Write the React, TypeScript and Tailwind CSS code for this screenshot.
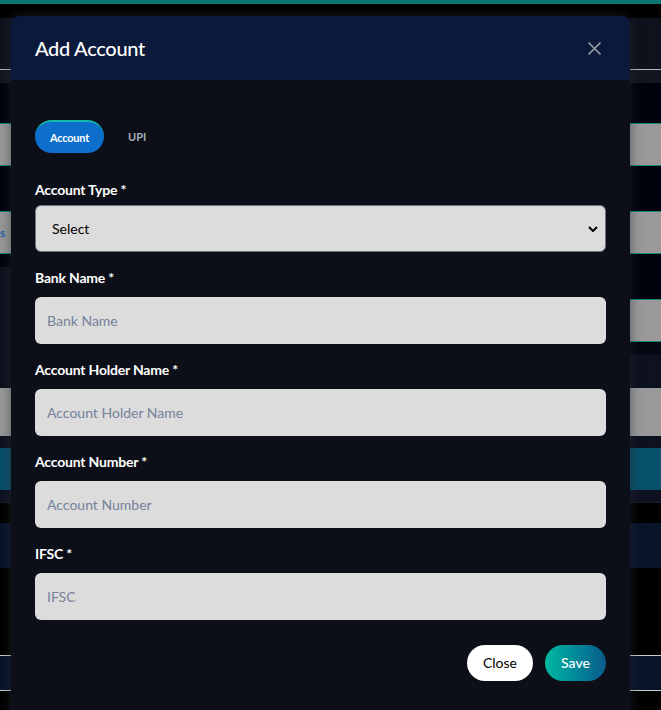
import React from "react";

function Field({ label, placeholder }: { label: string; placeholder: string }) {
  return (
    <div className="flex flex-col">
      <label className="text-[14px] leading-[20px] font-bold text-white mb-[9px] tracking-[-0.2px]">{label}</label>
      <input
        placeholder={placeholder}
        className="h-[47px] w-full rounded-[6px] bg-[#dcdcdc] px-[12px] text-[14px] text-black placeholder:text-[#74839a] outline-none"
      />
    </div>
  );
}

export default function App() {
  return (
    <div className="relative h-[710px] w-[661px] overflow-hidden bg-black" style={{ fontFamily: "Lato, 'Noto Sans', sans-serif" }}>
      {/* page behind the modal (dimmed) */}
      <div className="flex flex-col">
        <div className="h-[4px] bg-[#0a7472]" />
        <div className="h-[14px] bg-black" />
        <div className="h-[52px] bg-[#0e121c] border-b border-[#b8bcc2]" />
        <div className="h-[13px] bg-[#12161f]" />
        <div className="h-[40px] bg-[#00030e]" />
        <div className="h-[43px] bg-[#999999] border-y border-[#0b8a7c]" />
        <div className="h-[45px] bg-[#00030e]" />
        <div className="h-[43px] bg-[#999999] border-y border-[#0b8a7c] flex items-center">
          <span className="text-[#1d5fb0] text-[12px] font-bold leading-none">s</span>
        </div>
        <div className="flex h-[134px]">
          <div className="w-[40px] flex flex-col">
            <div className="h-[13px] bg-[#00030e]" />
            <div className="flex-1 bg-[#0d111c]" />
          </div>
          <div className="flex-1 flex flex-col bg-[#00030e]">
            <div className="h-[45px]" />
            <div className="h-[43px] bg-[#999999] border-y border-[#0b8a7c]" />
            <div className="h-[13px] bg-[#050810]" />
            <div className="flex-1 bg-[#0e1220]" />
          </div>
        </div>
        <div className="h-[48px] bg-[#999999]" />
        <div className="h-[12px] bg-[#0e1220]" />
        <div className="h-[42px] bg-[#07506a]" />
        <div className="h-[13px] bg-[#0e1220] border-b border-[#1a1f2a]" />
        <div className="h-[20px] bg-black" />
        <div className="h-[45px] bg-[#081428]" />
        <div className="h-[87px] bg-black" />
        <div className="h-[36px] bg-[#081428] border-y border-[#c8ccd0]" />
        <div className="h-[20px] bg-black" />
      </div>

      {/* modal */}
      <div className="absolute left-[11px] top-[16px] w-[619px] h-[720px] rounded-t-[8px] overflow-hidden bg-[#0c0f18] shadow-[0_0_12px_rgba(40,44,54,0.6)]">
        <div className="h-[64px] bg-[#0b1a3b] flex items-center justify-between pl-[24px] pr-[28px]">
          <h2 className="text-[20px] font-medium text-white tracking-[-0.3px]">Add Account</h2>
          <button className="text-[#9aa0a8]">
            <svg width="15" height="15" viewBox="0 0 15 15" fill="none" stroke="currentColor" strokeWidth="1.6">
              <path d="M1.5 1.5 L13.5 13.5 M13.5 1.5 L1.5 13.5" />
            </svg>
          </button>
        </div>
        <div className="px-[24px] pt-[40px]">
          <div className="flex items-center gap-[24px]">
            <button className="h-[33px] w-[69px] rounded-full bg-[#0d6ecb] border-t-2 border-[#14b8a6] text-white text-[11px] font-bold tracking-[-0.2px] pt-[1px]">
              Account
            </button>
            <span className="text-[11px] font-bold text-[#aab0b8] pt-[2px]">UPI</span>
          </div>

          <div className="mt-[27px] flex flex-col">
            <label className="text-[14px] leading-[20px] font-bold text-white mb-[5px] tracking-[-0.2px]">Account Type *</label>
            <div className="relative">
              <select className="h-[47px] w-full appearance-none rounded-[6px] border border-[#6b7280] bg-[#dcdcdc] pl-[16px] text-[14px] text-black outline-none">
                <option>Select</option>
              </select>
              <svg className="absolute right-[8px] top-[21px]" width="10" height="6" viewBox="0 0 10 6" fill="none" stroke="black" strokeWidth="2">
                <path d="M1 1 L5 5 L9 1" />
              </svg>
            </div>
          </div>

          <div className="mt-[16px] flex flex-col gap-[16px]">
            <Field label="Bank Name *" placeholder="Bank Name" />
            <Field label="Account Holder Name *" placeholder="Account Holder Name" />
            <Field label="Account Number *" placeholder="Account Number" />
            <Field label="IFSC *" placeholder="IFSC" />
          </div>

          <div className="mt-[25px] flex justify-end gap-[12px]">
            <button className="h-[36px] w-[66px] rounded-full bg-white text-[14px] text-black pb-[1px]">Close</button>
            <button className="h-[36px] w-[61px] rounded-full bg-gradient-to-r from-[#00b9a1] to-[#0b5b8c] text-[14px] text-white font-medium pb-[1px]">
              Save
            </button>
          </div>
        </div>
      </div>
    </div>
  );
}
